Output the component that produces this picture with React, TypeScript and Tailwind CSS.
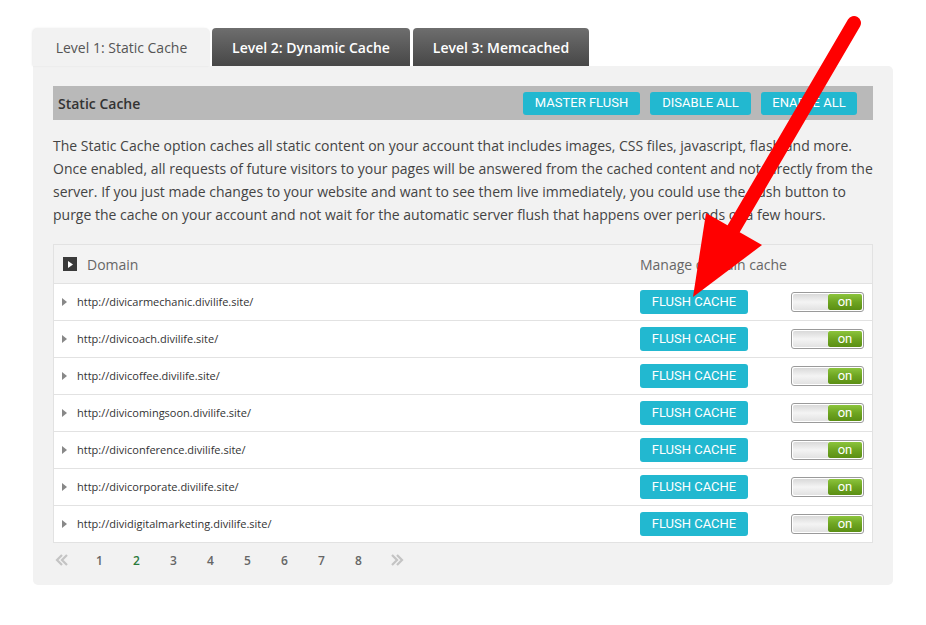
import React from "react";

const domains = [
  "http://divicarmechanic.divilife.site/",
  "http://divicoach.divilife.site/",
  "http://divicoffee.divilife.site/",
  "http://divicomingsoon.divilife.site/",
  "http://diviconference.divilife.site/",
  "http://divicorporate.divilife.site/",
  "http://dividigitalmarketing.divilife.site/",
];

function Toggle() {
  return (
    <div className="flex h-[20px] w-[73px] overflow-hidden rounded-[3px] border border-[#9a9a9a] bg-white p-[1px]">
      <div className="h-full w-[35px] rounded-l-[2px] bg-gradient-to-b from-[#d9d9d9] via-[#f4f4f4] to-[#e2e2e2]" />
      <div className="flex h-full flex-1 items-center justify-center rounded-[2px] bg-gradient-to-b from-[#8cc43c] via-[#6ea521] to-[#5b8f14] text-[13px] leading-none text-white" style={{ fontFamily: "Roboto, sans-serif" }}>
        <span className="-mt-[2px]">on</span>
      </div>
    </div>
  );
}

export default function App() {
  const para = [
    "The Static Cache option caches all static content on your account that includes images, CSS files, javascript, flash and more.",
    "Once enabled, all requests of future visitors to your pages will be answered from the cached content and not directly from the",
    "server. If you just made changes to your website and want to see them live immediately, you could use the flush button to",
    "purge the cache on your account and not wait for the automatic server flush that happens over periods of a few hours.",
  ];
  return (
    <div className="relative h-[625px] w-[926px] overflow-hidden bg-white pl-[33px] pt-[28px]" style={{ fontFamily: '"Open Sans", sans-serif' }}>
      {/* Tabs */}
      <div className="flex h-[38px] items-end gap-[2px]">
        <div className="flex h-[38px] w-[177px] items-center justify-center rounded-t-[5px] bg-[#f2f2f2] text-[14px] font-medium text-[#555] shadow-[-1px_0_2px_rgba(0,0,0,0.08)]">
          Level 1: Static Cache
        </div>
        <div className="flex h-[38px] w-[198px] items-center justify-center rounded-t-[4px] bg-gradient-to-b from-[#6e6e6e] to-[#474747] text-[14px] font-semibold text-white">
          Level 2: Dynamic Cache
        </div>
        <div className="ml-[1px] flex h-[38px] w-[176px] items-center justify-center rounded-t-[4px] bg-gradient-to-b from-[#6e6e6e] to-[#474747] text-[14px] font-semibold text-white">
          Level 3: Memcached
        </div>
      </div>

      {/* Panel */}
      <div className="w-[860px] rounded-b-[5px] rounded-tr-[5px] bg-[#f2f2f2] px-[20px] pb-[6px] pt-[20px]">
        <div className="flex h-[34px] items-center justify-between bg-[#b9b9b9] pl-[5px] pr-[16px]">
          <span className="text-[14px] font-semibold text-[#333]">Static Cache</span>
          <div className="flex gap-[10px]" style={{ fontFamily: "Roboto, sans-serif" }}>
            <button className="h-[23px] w-[117px] rounded-[3px] bg-[#22b8d0] text-[13px] text-white">MASTER FLUSH</button>
            <button className="h-[23px] w-[101px] rounded-[3px] bg-[#22b8d0] text-[13px] text-white">DISABLE ALL</button>
            <button className="h-[23px] w-[96px] rounded-[3px] bg-[#22b8d0] text-[13px] text-white">ENABLE ALL</button>
          </div>
        </div>

        <div className="mt-[14px] text-[14px] leading-[23px] text-[#444]">
          {para.map((l) => (
            <div key={l} className="whitespace-nowrap">{l}</div>
          ))}
        </div>

        <div className="mt-[18px] border border-[#e2e2e2] bg-white">
          <div className="flex h-[38px] items-center bg-[#f3f3f3] text-[14px] text-[#666]">
            <div className="flex flex-1 items-center pl-[9px]">
              <span className="flex h-[14px] w-[14px] items-center justify-center bg-[#3a3a3a]">
                <svg width="5" height="7" viewBox="0 0 5 7"><path d="M0 0L5 3.5L0 7Z" fill="#fff" /></svg>
              </span>
              <span className="ml-[10px]">Domain</span>
            </div>
            <div className="w-[232px]">Manage domain cache</div>
          </div>
          {domains.map((d) => (
            <div key={d} className="flex h-[37px] items-center border-t border-[#e2e2e2]">
              <div className="flex flex-1 items-center pl-[8px] text-[11px] text-[#333]">
                <svg width="5" height="8" viewBox="0 0 5 8"><path d="M0 0L5 4L0 8Z" fill="#888" /></svg>
                <span className="ml-[10px]">{d}</span>
              </div>
              <div className="flex w-[232px] items-center">
                <button className="h-[24px] w-[108px] rounded-[3px] bg-[#22b8d0] text-[13px] text-white" style={{ fontFamily: "Roboto, sans-serif" }}>
                  FLUSH CACHE
                </button>
                <div className="ml-[43px]">
                  <Toggle />
                </div>
              </div>
            </div>
          ))}
        </div>

        <div className="flex h-[36px] items-center pl-[2px] text-[12px] font-semibold text-[#666]">
          <svg width="14" height="14" viewBox="0 0 14 14" className="mb-[3px]">
            <path d="M7 2L2 7L7 12M12 2L7 7L12 12" stroke="#c4c4c4" strokeWidth="2.2" fill="none" />
          </svg>
          <div className="ml-[27px] flex">
            {[1, 2, 3, 4, 5, 6, 7, 8].map((n) => (
              <span key={n} className={`w-[37px] ${n === 2 ? "text-[#2a7a3a]" : ""}`}>{n}</span>
            ))}
          </div>
          <svg width="14" height="14" viewBox="0 0 14 14" className="mb-[3px] -ml-[2px]">
            <path d="M2 2L7 7L2 12M7 2L12 7L7 12" stroke="#c4c4c4" strokeWidth="2.2" fill="none" />
          </svg>
        </div>
      </div>

      {/* Red arrow overlay */}
      <svg className="pointer-events-none absolute left-0 top-0" width="926" height="625" viewBox="0 0 926 625">
        <line x1="854" y1="23" x2="730" y2="235" stroke="#ff0000" strokeWidth="14" strokeLinecap="round" />
        <path d="M706 213L762 245L693 297Z" fill="#ff0000" />
      </svg>
    </div>
  );
}
